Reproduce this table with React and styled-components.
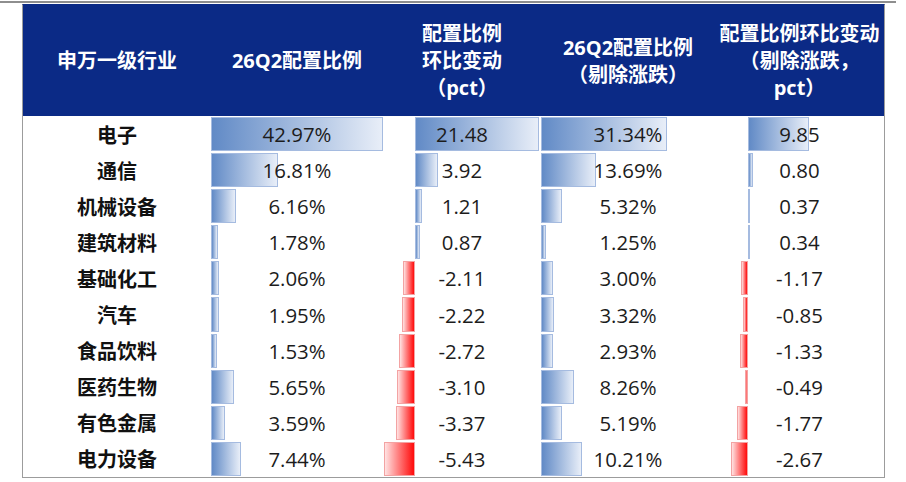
import React from 'react';
import styled, { createGlobalStyle } from 'styled-components';

const GlobalStyle = createGlobalStyle`
  html, body {
    margin: 0;
    padding: 0;
    background: #ffffff;
  }
  body {
    font-family: "Open Sans", "Noto Sans CJK SC", sans-serif;
  }
`;

const COLS = '188px 172px 158px 174px 169px';

const rows = [
  ['电子', 42.97, 21.48, 31.34, 9.85],
  ['通信', 16.81, 3.92, 13.69, 0.8],
  ['机械设备', 6.16, 1.21, 5.32, 0.37],
  ['建筑材料', 1.78, 0.87, 1.25, 0.34],
  ['基础化工', 2.06, -2.11, 3.0, -1.17],
  ['汽车', 1.95, -2.22, 3.32, -0.85],
  ['食品饮料', 1.53, -2.72, 2.93, -1.33],
  ['医药生物', 5.65, -3.1, 8.26, -0.49],
  ['有色金属', 3.59, -3.37, 5.19, -1.77],
  ['电力设备', 7.44, -5.43, 10.21, -2.67],
];

// axis offset inside the cell (px) and px per unit, per data column
const scales = [
  { axis: 0, unit: 4.0, pct: true },
  { axis: 32, unit: 5.75, pct: false },
  { axis: 0, unit: 4.02, pct: true },
  { axis: 33, unit: 6.2, pct: false },
];

const Page = styled.div`
  width: 906px;
  height: 482px;
  overflow: hidden;
`;

const TopRule = styled.div`
  width: 896px;
  height: 2px;
  margin-top: 1px;
  background: #8e8e8e;
`;

const Table = styled.div`
  width: 861px;
  margin: 1px 0 0 22px;
  border: 1px solid #9c9c9c;
  border-top-color: #0b2a86;
`;

const HeaderRow = styled.div`
  display: grid;
  grid-template-columns: ${COLS};
  height: 111px;
  background: #0b2a86;
  color: #ffffff;
  align-items: center;
`;

const HeadCell = styled.div`
  text-align: center;
  font-family: "Open Sans", "Noto Sans CJK SC", sans-serif;
  font-weight: 700;
  font-size: 20px;
  line-height: 27px;
  white-space: nowrap;
`;

const Row = styled.div`
  display: grid;
  grid-template-columns: ${COLS};
  height: 36.1px;
`;

const NameCell = styled.div`
  display: flex;
  align-items: center;
  justify-content: center;
  font-family: "Noto Sans CJK SC", sans-serif;
  font-weight: 700;
  font-size: 20px;
  color: #111111;
`;

const DataCell = styled.div`
  position: relative;
  display: flex;
  align-items: center;
  justify-content: center;
`;

const Value = styled.span`
  position: relative;
  z-index: 1;
  font-family: "Open Sans", sans-serif;
  font-size: 20.4px;
  color: #1c1c1c;
`;

const Bar = styled.div`
  position: absolute;
  top: 1px;
  bottom: 1px;
  box-sizing: border-box;
  border: 1px solid ${(p) => (p.$neg ? '#f3a3a3' : '#a5bbe0')};
  background: ${(p) =>
    p.$neg
      ? 'linear-gradient(to left, #ff0a0a, #ffe2e2)'
      : 'linear-gradient(to right, #618ac6, #e8eef8)'};
`;

function DataBar({ value, scale }) {
  const w = Math.abs(value) * scale.unit;
  const neg = value < 0;
  const left = neg ? scale.axis - w : scale.axis;
  return <Bar $neg={neg} style={{ left: `${left}px`, width: `${w}px` }} />;
}

export default function App() {
  return (
    <Page>
      <GlobalStyle />
      <TopRule />
      <Table>
        <HeaderRow>
          <HeadCell>申万一级行业</HeadCell>
          <HeadCell>26Q2配置比例</HeadCell>
          <HeadCell>
            配置比例
            <br />
            环比变动
            <br />
            （pct）
          </HeadCell>
          <HeadCell>
            26Q2配置比例
            <br />
            （剔除涨跌）
          </HeadCell>
          <HeadCell>
            配置比例环比变动
            <br />
            （剔除涨跌，
            <br />
            pct）
          </HeadCell>
        </HeaderRow>
        {rows.map(([name, ...vals]) => (
          <Row key={name}>
            <NameCell>{name}</NameCell>
            {vals.map((v, i) => (
              <DataCell key={i}>
                <DataBar value={v} scale={scales[i]} />
                <Value>{scales[i].pct ? `${v.toFixed(2)}%` : v.toFixed(2)}</Value>
              </DataCell>
            ))}
          </Row>
        ))}
      </Table>
    </Page>
  );
}
